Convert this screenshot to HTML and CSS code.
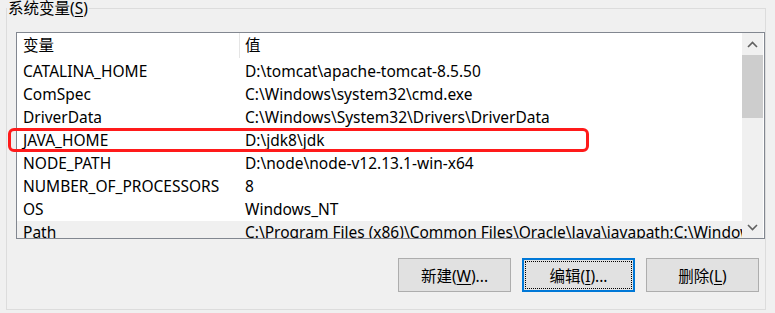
FILE: index.html
```html
<!DOCTYPE html>
<html lang="zh-CN">
<head>
  <meta charset="UTF-8">
  <title>系统变量</title>
  <link rel="stylesheet" href="styles.css">
</head>
<body>
  <fieldset class="group">
    <legend>系统变量(<u>S</u>)</legend>

    <div class="list-wrap">
      <div class="list">
        <div class="rows">
          <div class="row head">
            <span class="name">变量</span>
            <span class="value">值</span>
          </div>
          <div class="row">
            <span class="name">CATALINA_HOME</span>
            <span class="value">D:\tomcat\apache-tomcat-8.5.50</span>
          </div>
          <div class="row">
            <span class="name">ComSpec</span>
            <span class="value">C:\Windows\system32\cmd.exe</span>
          </div>
          <div class="row">
            <span class="name">DriverData</span>
            <span class="value">C:\Windows\System32\Drivers\DriverData</span>
          </div>
          <div class="row">
            <span class="name">JAVA_HOME</span>
            <span class="value">D:\jdk8\jdk</span>
          </div>
          <div class="row">
            <span class="name">NODE_PATH</span>
            <span class="value">D:\node\node-v12.13.1-win-x64</span>
          </div>
          <div class="row">
            <span class="name">NUMBER_OF_PROCESSORS</span>
            <span class="value">8</span>
          </div>
          <div class="row">
            <span class="name">OS</span>
            <span class="value">Windows_NT</span>
          </div>
          <div class="row inactive">
            <span class="name">Path</span>
            <span class="value">C:\Program Files (x86)\Common Files\Oracle\Java\javapath;C:\Windows\system32;C:\Windows</span>
          </div>
        </div>

        <div class="scrollbar">
          <div class="arrow">
            <svg width="11" height="7" viewBox="0 0 11 7"><path d="M1 6 L5.5 1.5 L10 6" fill="none" stroke="#606060" stroke-width="1.6"/></svg>
          </div>
          <div class="track">
            <div class="thumb"></div>
          </div>
          <div class="arrow">
            <svg width="11" height="7" viewBox="0 0 11 7"><path d="M1 1 L5.5 5.5 L10 1" fill="none" stroke="#606060" stroke-width="1.6"/></svg>
          </div>
        </div>
      </div>

      <!-- annotation around the JAVA_HOME row -->
      <div class="mark"></div>
    </div>

    <div class="buttons">
      <button type="button">新建(<u>W</u>)...</button>
      <button type="button" class="focused">编辑(<u>I</u>)...</button>
      <button type="button">删除(<u>L</u>)</button>
    </div>
  </fieldset>
</body>
</html>
```

FILE: styles.css
```css
/* Reset and base */
* {
  box-sizing: border-box;
}

body {
  margin: 0;
  background: #f0f0f0;
  font-family: "Noto Sans", "Noto Sans CJK SC", sans-serif;
  font-size: 15.5px;
  color: #000;
  overflow: hidden;
}

u {
  text-decoration-thickness: 1px;
  text-underline-offset: 2px;
}

.group {
  margin: -3px 9px 0 6px;
  padding: 0 0 17px 9px;
  border: 1px solid #dcdcdc;
  min-width: 0;
}

.group legend {
  padding: 0 1px;
  margin-left: -9px;
  line-height: 22px;
}

/* list view */
.list-wrap {
  position: relative;
  margin-top: 13px;
}

.list {
  display: flex;
  height: 207px;
  border: 1px solid #828790;
  background: #fff;
}

.rows {
  flex: 1;
  min-width: 0;
  overflow: hidden;
}

.row {
  display: flex;
  height: 23px;
  line-height: 23px;
  white-space: nowrap;
}

.row.head {
  height: 27px;
  line-height: 25px;
}

.row .name {
  flex: 0 0 222px;
  padding-left: 6px;
  overflow: hidden;
}

.row .value {
  flex: 1;
  padding-left: 5px;
  overflow: hidden;
}

.row.head .value {
  border-left: 1px solid #e5e5e5;
  height: 25px;
}

.row:not(.head) .value {
  margin-left: 1px;
}

.row.inactive {
  background: #f0f0f0;
}

/* scrollbar */
.scrollbar {
  flex: 0 0 21px;
  margin-right: 1px;
  display: flex;
  flex-direction: column;
  background: #f0f0f0;
}

.arrow {
  height: 22px;
  display: flex;
  align-items: center;
  justify-content: center;
}

.track {
  flex: 1;
}

.thumb {
  height: 63px;
  background: #cdcdcd;
}

.mark {
  position: absolute;
  left: -8px;
  top: 96px;
  width: 581px;
  height: 24px;
  border: 3px solid #ff1a1a;
  border-radius: 6px;
}

/* buttons */
.buttons {
  display: flex;
  justify-content: flex-end;
  gap: 11px;
  margin-top: 19px;
  padding-right: 6px;
}

button {
  width: 113px;
  height: 34px;
  background: #e1e1e1;
  border: 1px solid #adadad;
  font-family: inherit;
  font-size: 15.5px;
  color: #000;
  padding: 0;
}

button.focused {
  border-color: #0078d7;
  box-shadow: inset 0 0 0 1px #0078d7;
  outline: 1px dotted #000;
  outline-offset: -4px;
}
```
